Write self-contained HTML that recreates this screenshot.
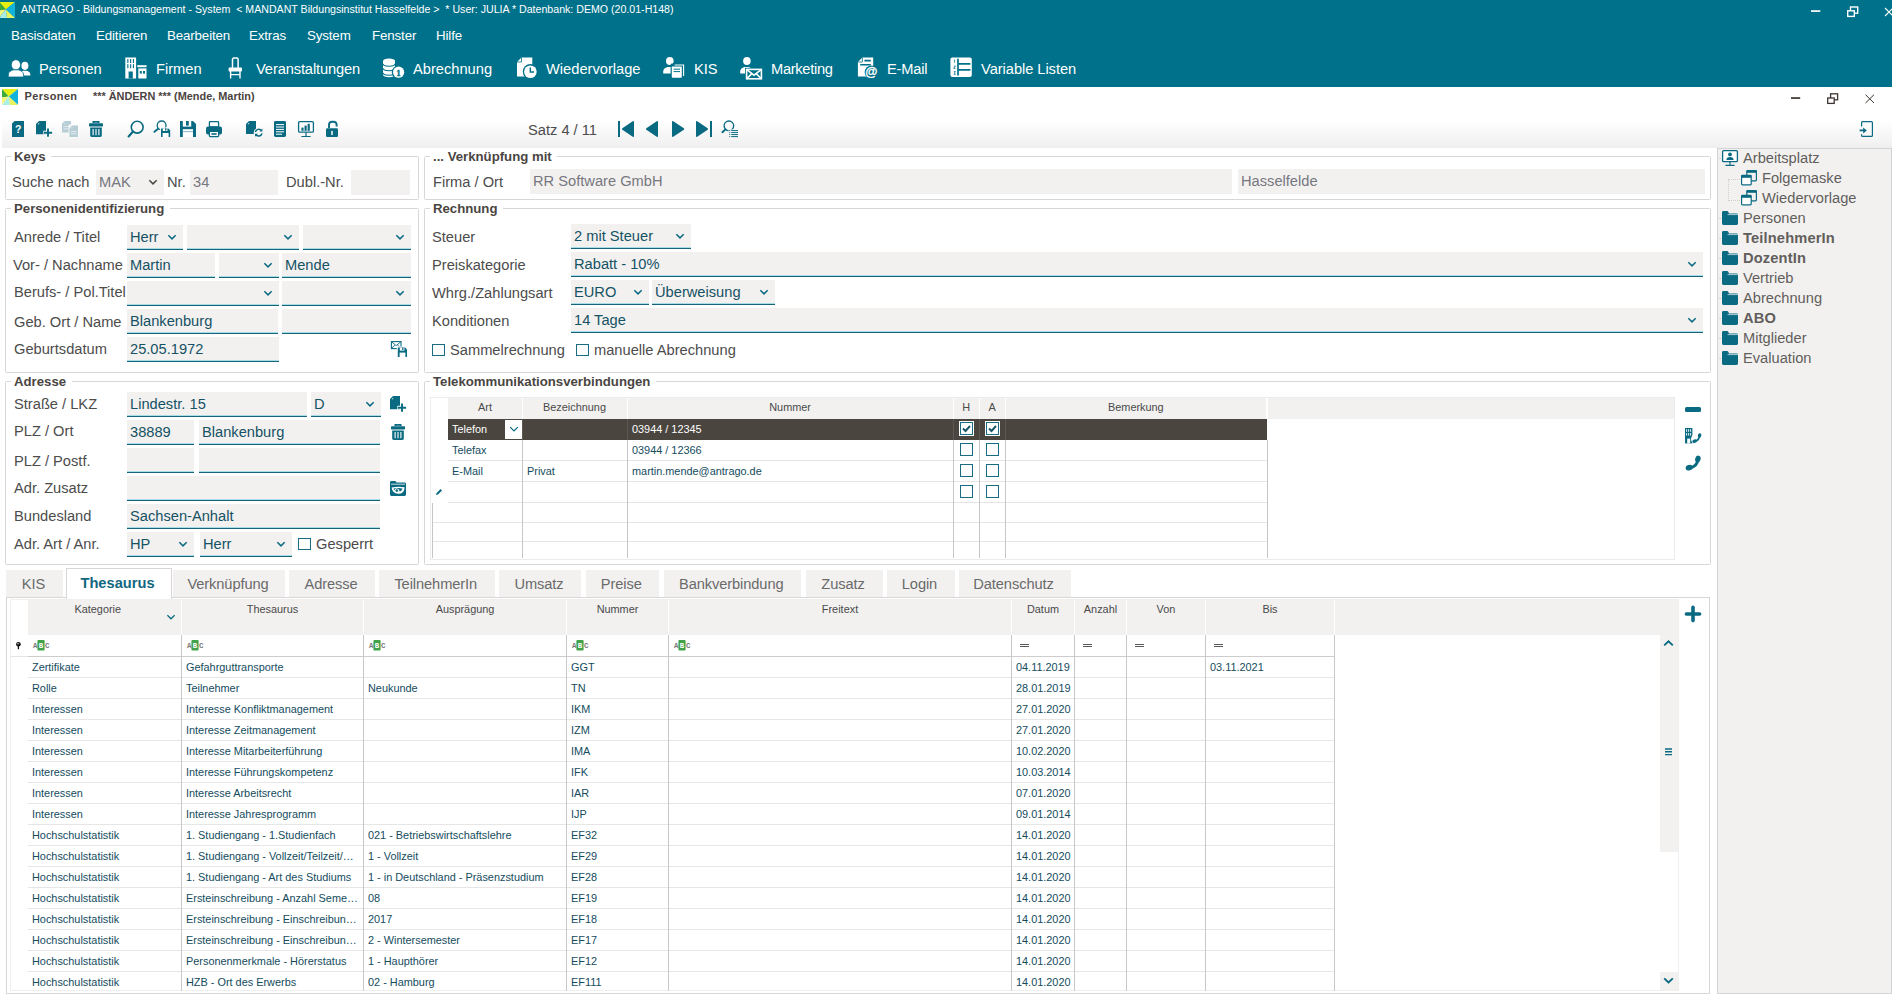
<!DOCTYPE html>
<html lang="de"><head><meta charset="utf-8"><title>ANTRAGO - Bildungsmanagement - System</title>
<style>
html,body{margin:0;padding:0;}
body{width:1892px;height:996px;overflow:hidden;background:#fff;position:relative;font-family:"Liberation Sans",Arial,sans-serif;}
.t{position:absolute;white-space:nowrap;}
.r{position:absolute;}
svg{overflow:visible;}
</style></head><body>
<div class="r" style="left:0px;top:0px;width:1892px;height:86.6px;background:#00718a;"></div>
<div class="t" style="left:21px;top:-1.50px;font-size:10.62px;color:#fff;line-height:20px;">ANTRAGO - Bildungsmanagement - System&nbsp; &lt; MANDANT Bildungsinstitut Hasselfelde &gt;&nbsp; * User: JULIA * Datenbank: DEMO (20.01-H148)</div>
<div class="t" style="left:11px;top:26.10px;font-size:13.33px;color:#fff;line-height:20px;letter-spacing:-0.14px;">Basisdaten</div>
<div class="t" style="left:96px;top:26.10px;font-size:13.33px;color:#fff;line-height:20px;letter-spacing:-0.14px;">Editieren</div>
<div class="t" style="left:167px;top:26.10px;font-size:13.33px;color:#fff;line-height:20px;letter-spacing:-0.14px;">Bearbeiten</div>
<div class="t" style="left:249px;top:26.10px;font-size:13.33px;color:#fff;line-height:20px;letter-spacing:-0.14px;">Extras</div>
<div class="t" style="left:307px;top:26.10px;font-size:13.33px;color:#fff;line-height:20px;letter-spacing:-0.14px;">System</div>
<div class="t" style="left:372px;top:26.10px;font-size:13.33px;color:#fff;line-height:20px;letter-spacing:-0.14px;">Fenster</div>
<div class="t" style="left:436px;top:26.10px;font-size:13.33px;color:#fff;line-height:20px;letter-spacing:-0.14px;">Hilfe</div>
<div class="t" style="left:39px;top:59.00px;font-size:14.67px;color:#fff;line-height:20px;letter-spacing:0px;">Personen</div>
<div class="t" style="left:156px;top:59.00px;font-size:14.67px;color:#fff;line-height:20px;letter-spacing:0px;">Firmen</div>
<div class="t" style="left:256px;top:59.00px;font-size:14.67px;color:#fff;line-height:20px;letter-spacing:-0.12px;">Veranstaltungen</div>
<div class="t" style="left:413px;top:59.00px;font-size:14.67px;color:#fff;line-height:20px;letter-spacing:0px;">Abrechnung</div>
<div class="t" style="left:546px;top:59.00px;font-size:14.67px;color:#fff;line-height:20px;letter-spacing:0px;">Wiedervorlage</div>
<div class="t" style="left:694px;top:59.00px;font-size:14.67px;color:#fff;line-height:20px;letter-spacing:0px;">KIS</div>
<div class="t" style="left:771px;top:59.00px;font-size:14.67px;color:#fff;line-height:20px;letter-spacing:-0.3px;">Marketing</div>
<div class="t" style="left:887px;top:59.00px;font-size:14.67px;color:#fff;line-height:20px;letter-spacing:-0.2px;">E-Mail</div>
<div class="t" style="left:981px;top:59.00px;font-size:14.67px;color:#fff;line-height:20px;letter-spacing:-0.05px;">Variable Listen</div>
<div class="t" style="left:24.5px;top:85.50px;font-size:11px;color:#4a4340;line-height:20px;font-weight:bold;letter-spacing:0.35px;">Personen</div>
<div class="t" style="left:93px;top:85.50px;font-size:10.9px;color:#4a4340;line-height:20px;font-weight:bold;">*** ÄNDERN *** (Mende, Martin)</div>
<div class="r" style="left:2px;top:114px;width:1890px;height:34px;background:linear-gradient(#ffffff 0%,#ffffff 18%,#f0efef 100%);"></div>
<div class="t" style="left:528px;top:120.00px;font-size:14.67px;color:#4c4c4c;line-height:20px;">Satz 4 / 11</div>
<div class="r" style="left:1717px;top:148px;width:175px;height:846px;background:#f2f1f0;border:1px solid #d4d4d4;box-sizing:border-box;"></div>
<div class="t" style="left:1743px;top:147.50px;font-size:14.67px;color:#625e5c;line-height:20px;">Arbeitsplatz</div>
<div class="t" style="left:1762px;top:167.50px;font-size:14.67px;color:#625e5c;line-height:20px;">Folgemaske</div>
<div class="t" style="left:1762px;top:187.50px;font-size:14.67px;color:#625e5c;line-height:20px;">Wiedervorlage</div>
<div class="t" style="left:1743px;top:207.50px;font-size:14.67px;color:#625e5c;line-height:20px;">Personen</div>
<div class="t" style="left:1743px;top:227.50px;font-size:14.67px;color:#625e5c;line-height:20px;font-weight:bold;letter-spacing:0.15px;">TeilnehmerIn</div>
<div class="t" style="left:1743px;top:247.50px;font-size:14.67px;color:#625e5c;line-height:20px;font-weight:bold;letter-spacing:0.15px;">DozentIn</div>
<div class="t" style="left:1743px;top:267.50px;font-size:14.67px;color:#625e5c;line-height:20px;">Vertrieb</div>
<div class="t" style="left:1743px;top:287.50px;font-size:14.67px;color:#625e5c;line-height:20px;">Abrechnung</div>
<div class="t" style="left:1743px;top:307.50px;font-size:14.67px;color:#625e5c;line-height:20px;font-weight:bold;letter-spacing:0.15px;">ABO</div>
<div class="t" style="left:1743px;top:327.50px;font-size:14.67px;color:#625e5c;line-height:20px;">Mitglieder</div>
<div class="t" style="left:1743px;top:347.50px;font-size:14.67px;color:#625e5c;line-height:20px;">Evaluation</div>
<div class="r" style="left:5px;top:156px;width:412px;height:42px;border:1px solid #d8d6d7;border-radius:1.5px;"></div>
<div class="t" style="left:11px;top:147.1px;font-size:13.2px;color:#4a4542;line-height:20px;font-weight:bold;background:linear-gradient(transparent 7px,#fff 7px,#fff 12px,transparent 12px);padding:0 5.5px 0 3px;">Keys</div>
<div class="t" style="left:12px;top:171.50px;font-size:14.67px;color:#4c4c4c;line-height:20px;">Suche nach</div>
<div class="r" style="left:96px;top:170px;width:68px;height:24.6px;background:#f2f1f0;"></div>
<div class="t" style="left:99px;top:172.00px;font-size:14.67px;color:#77777e;line-height:20px;">MAK</div>
<svg class="r" style="left:147px;top:176.3px" width="12" height="12" viewBox="-6 -6 12 12"><path d="M-3.68 -1.84 L0 1.84 L3.68 -1.84" fill="none" stroke="#4b4540" stroke-width="1.5"/></svg>
<div class="t" style="left:167px;top:172.00px;font-size:14.67px;color:#4c4c4c;line-height:20px;">Nr.</div>
<div class="r" style="left:190px;top:170px;width:88px;height:24.6px;background:#f2f1f0;"></div>
<div class="t" style="left:193px;top:172.00px;font-size:14.67px;color:#77777e;line-height:20px;">34</div>
<div class="t" style="left:286px;top:171.50px;font-size:14.67px;color:#4c4c4c;line-height:20px;">Dubl.-Nr.</div>
<div class="r" style="left:351px;top:170px;width:59px;height:24.6px;background:#f2f1f0;"></div>
<div class="r" style="left:424px;top:156px;width:1285px;height:42px;border:1px solid #d8d6d7;border-radius:1.5px;"></div>
<div class="t" style="left:430px;top:147.1px;font-size:13.2px;color:#4a4542;line-height:20px;font-weight:bold;background:linear-gradient(transparent 7px,#fff 7px,#fff 12px,transparent 12px);padding:0 5.5px 0 3px;">... Verknüpfung mit</div>
<div class="t" style="left:433px;top:171.50px;font-size:14.67px;color:#4c4c4c;line-height:20px;">Firma / Ort</div>
<div class="r" style="left:530px;top:169px;width:702px;height:25px;background:#f2f1f0;"></div>
<div class="t" style="left:533px;top:171.00px;font-size:14.67px;color:#77777e;line-height:20px;">RR Software GmbH</div>
<div class="r" style="left:1238px;top:169px;width:467px;height:25px;background:#f2f1f0;"></div>
<div class="t" style="left:1241px;top:171.00px;font-size:14.67px;color:#77777e;line-height:20px;">Hasselfelde</div>
<div class="r" style="left:5px;top:208px;width:412px;height:163px;border:1px solid #d8d6d7;border-radius:1.5px;"></div>
<div class="t" style="left:11px;top:199.1px;font-size:13.2px;color:#4a4542;line-height:20px;font-weight:bold;background:linear-gradient(transparent 7px,#fff 7px,#fff 12px,transparent 12px);padding:0 5.5px 0 3px;">Personenidentifizierung</div>
<div class="t" style="left:14px;top:226.50px;font-size:14.67px;color:#4c4c4c;line-height:20px;">Anrede / Titel</div>
<div class="r" style="left:127px;top:225px;width:56px;height:25px;background:#f2f1f0;"></div>
<div class="r" style="left:127px;top:248px;width:56px;height:1px;background:#a9dde6;"></div>
<div class="r" style="left:127px;top:248.6px;width:56px;height:1.4px;background:#17647a;"></div>
<div class="t" style="left:130px;top:227.00px;font-size:14.67px;color:#155264;line-height:20px;">Herr</div>
<svg class="r" style="left:166px;top:231.3px" width="12" height="12" viewBox="-6 -6 12 12"><path d="M-3.68 -1.84 L0 1.84 L3.68 -1.84" fill="none" stroke="#0b6a82" stroke-width="1.5"/></svg>
<div class="r" style="left:187px;top:225px;width:112px;height:25px;background:#f2f1f0;"></div>
<div class="r" style="left:187px;top:248px;width:112px;height:1px;background:#a9dde6;"></div>
<div class="r" style="left:187px;top:248.6px;width:112px;height:1.4px;background:#17647a;"></div>
<svg class="r" style="left:282px;top:231.3px" width="12" height="12" viewBox="-6 -6 12 12"><path d="M-3.68 -1.84 L0 1.84 L3.68 -1.84" fill="none" stroke="#0b6a82" stroke-width="1.5"/></svg>
<div class="r" style="left:303px;top:225px;width:108px;height:25px;background:#f2f1f0;"></div>
<div class="r" style="left:303px;top:248px;width:108px;height:1px;background:#a9dde6;"></div>
<div class="r" style="left:303px;top:248.6px;width:108px;height:1.4px;background:#17647a;"></div>
<svg class="r" style="left:394px;top:231.3px" width="12" height="12" viewBox="-6 -6 12 12"><path d="M-3.68 -1.84 L0 1.84 L3.68 -1.84" fill="none" stroke="#0b6a82" stroke-width="1.5"/></svg>
<div class="t" style="left:13px;top:254.50px;font-size:14.67px;color:#4c4c4c;line-height:20px;">Vor- / Nachname</div>
<div class="r" style="left:127px;top:253px;width:88px;height:25px;background:#f2f1f0;"></div>
<div class="r" style="left:127px;top:276px;width:88px;height:1px;background:#a9dde6;"></div>
<div class="r" style="left:127px;top:276.6px;width:88px;height:1.4px;background:#17647a;"></div>
<div class="t" style="left:130px;top:255.00px;font-size:14.67px;color:#155264;line-height:20px;">Martin</div>
<div class="r" style="left:219px;top:253px;width:60px;height:25px;background:#f2f1f0;"></div>
<div class="r" style="left:219px;top:276px;width:60px;height:1px;background:#a9dde6;"></div>
<div class="r" style="left:219px;top:276.6px;width:60px;height:1.4px;background:#17647a;"></div>
<svg class="r" style="left:262px;top:259.3px" width="12" height="12" viewBox="-6 -6 12 12"><path d="M-3.68 -1.84 L0 1.84 L3.68 -1.84" fill="none" stroke="#0b6a82" stroke-width="1.5"/></svg>
<div class="r" style="left:282px;top:253px;width:129px;height:25px;background:#f2f1f0;"></div>
<div class="r" style="left:282px;top:276px;width:129px;height:1px;background:#a9dde6;"></div>
<div class="r" style="left:282px;top:276.6px;width:129px;height:1.4px;background:#17647a;"></div>
<div class="t" style="left:285px;top:255.00px;font-size:14.67px;color:#155264;line-height:20px;">Mende</div>
<div class="t" style="left:14px;top:282.00px;font-size:14.67px;color:#4c4c4c;line-height:20px;">Berufs- / Pol.Titel</div>
<div class="r" style="left:127px;top:281px;width:152px;height:25px;background:#f2f1f0;"></div>
<div class="r" style="left:127px;top:304px;width:152px;height:1px;background:#a9dde6;"></div>
<div class="r" style="left:127px;top:304.6px;width:152px;height:1.4px;background:#17647a;"></div>
<svg class="r" style="left:262px;top:287.3px" width="12" height="12" viewBox="-6 -6 12 12"><path d="M-3.68 -1.84 L0 1.84 L3.68 -1.84" fill="none" stroke="#0b6a82" stroke-width="1.5"/></svg>
<div class="r" style="left:282px;top:281px;width:129px;height:25px;background:#f2f1f0;"></div>
<div class="r" style="left:282px;top:304px;width:129px;height:1px;background:#a9dde6;"></div>
<div class="r" style="left:282px;top:304.6px;width:129px;height:1.4px;background:#17647a;"></div>
<svg class="r" style="left:394px;top:287.3px" width="12" height="12" viewBox="-6 -6 12 12"><path d="M-3.68 -1.84 L0 1.84 L3.68 -1.84" fill="none" stroke="#0b6a82" stroke-width="1.5"/></svg>
<div class="t" style="left:14px;top:311.50px;font-size:14.67px;color:#4c4c4c;line-height:20px;">Geb. Ort / Name</div>
<div class="r" style="left:127px;top:309px;width:151px;height:25px;background:#f2f1f0;"></div>
<div class="r" style="left:127px;top:332px;width:151px;height:1px;background:#a9dde6;"></div>
<div class="r" style="left:127px;top:332.6px;width:151px;height:1.4px;background:#17647a;"></div>
<div class="t" style="left:130px;top:311.00px;font-size:14.67px;color:#155264;line-height:20px;">Blankenburg</div>
<div class="r" style="left:282px;top:309px;width:129px;height:25px;background:#f2f1f0;"></div>
<div class="r" style="left:282px;top:332px;width:129px;height:1px;background:#a9dde6;"></div>
<div class="r" style="left:282px;top:332.6px;width:129px;height:1.4px;background:#17647a;"></div>
<div class="t" style="left:14px;top:339.00px;font-size:14.67px;color:#4c4c4c;line-height:20px;">Geburtsdatum</div>
<div class="r" style="left:127px;top:337px;width:152px;height:25px;background:#f2f1f0;"></div>
<div class="r" style="left:127px;top:360px;width:152px;height:1px;background:#a9dde6;"></div>
<div class="r" style="left:127px;top:360.6px;width:152px;height:1.4px;background:#17647a;"></div>
<div class="t" style="left:130px;top:339.00px;font-size:14.67px;color:#155264;line-height:20px;">25.05.1972</div>
<div class="r" style="left:424px;top:208px;width:1285px;height:163px;border:1px solid #d8d6d7;border-radius:1.5px;"></div>
<div class="t" style="left:430px;top:199.1px;font-size:13.2px;color:#4a4542;line-height:20px;font-weight:bold;background:linear-gradient(transparent 7px,#fff 7px,#fff 12px,transparent 12px);padding:0 5.5px 0 3px;">Rechnung</div>
<div class="t" style="left:432px;top:226.50px;font-size:14.67px;color:#4c4c4c;line-height:20px;">Steuer</div>
<div class="r" style="left:571px;top:224px;width:120px;height:25px;background:#f2f1f0;"></div>
<div class="r" style="left:571px;top:247px;width:120px;height:1px;background:#a9dde6;"></div>
<div class="r" style="left:571px;top:247.6px;width:120px;height:1.4px;background:#17647a;"></div>
<div class="t" style="left:574px;top:226.00px;font-size:14.67px;color:#155264;line-height:20px;">2 mit Steuer</div>
<svg class="r" style="left:674px;top:230.3px" width="12" height="12" viewBox="-6 -6 12 12"><path d="M-3.68 -1.84 L0 1.84 L3.68 -1.84" fill="none" stroke="#0b6a82" stroke-width="1.5"/></svg>
<div class="t" style="left:432px;top:254.50px;font-size:14.67px;color:#4c4c4c;line-height:20px;">Preiskategorie</div>
<div class="r" style="left:571px;top:252px;width:1132px;height:25px;background:#f2f1f0;"></div>
<div class="r" style="left:571px;top:275px;width:1132px;height:1px;background:#a9dde6;"></div>
<div class="r" style="left:571px;top:275.6px;width:1132px;height:1.4px;background:#17647a;"></div>
<div class="t" style="left:574px;top:254.00px;font-size:14.67px;color:#155264;line-height:20px;">Rabatt - 10%</div>
<svg class="r" style="left:1686px;top:258.3px" width="12" height="12" viewBox="-6 -6 12 12"><path d="M-3.68 -1.84 L0 1.84 L3.68 -1.84" fill="none" stroke="#0b6a82" stroke-width="1.5"/></svg>
<div class="t" style="left:432px;top:282.50px;font-size:14.67px;color:#4c4c4c;line-height:20px;">Whrg./Zahlungsart</div>
<div class="r" style="left:571px;top:280px;width:78px;height:25px;background:#f2f1f0;"></div>
<div class="r" style="left:571px;top:303px;width:78px;height:1px;background:#a9dde6;"></div>
<div class="r" style="left:571px;top:303.6px;width:78px;height:1.4px;background:#17647a;"></div>
<div class="t" style="left:574px;top:282.00px;font-size:14.67px;color:#155264;line-height:20px;">EURO</div>
<svg class="r" style="left:632px;top:286.3px" width="12" height="12" viewBox="-6 -6 12 12"><path d="M-3.68 -1.84 L0 1.84 L3.68 -1.84" fill="none" stroke="#0b6a82" stroke-width="1.5"/></svg>
<div class="r" style="left:652px;top:280px;width:123px;height:25px;background:#f2f1f0;"></div>
<div class="r" style="left:652px;top:303px;width:123px;height:1px;background:#a9dde6;"></div>
<div class="r" style="left:652px;top:303.6px;width:123px;height:1.4px;background:#17647a;"></div>
<div class="t" style="left:655px;top:282.00px;font-size:14.67px;color:#155264;line-height:20px;">Überweisung</div>
<svg class="r" style="left:758px;top:286.3px" width="12" height="12" viewBox="-6 -6 12 12"><path d="M-3.68 -1.84 L0 1.84 L3.68 -1.84" fill="none" stroke="#0b6a82" stroke-width="1.5"/></svg>
<div class="t" style="left:432px;top:310.50px;font-size:14.67px;color:#4c4c4c;line-height:20px;">Konditionen</div>
<div class="r" style="left:571px;top:308px;width:1132px;height:25px;background:#f2f1f0;"></div>
<div class="r" style="left:571px;top:331px;width:1132px;height:1px;background:#a9dde6;"></div>
<div class="r" style="left:571px;top:331.6px;width:1132px;height:1.4px;background:#17647a;"></div>
<div class="t" style="left:574px;top:310.00px;font-size:14.67px;color:#155264;line-height:20px;">14 Tage</div>
<svg class="r" style="left:1686px;top:314.3px" width="12" height="12" viewBox="-6 -6 12 12"><path d="M-3.68 -1.84 L0 1.84 L3.68 -1.84" fill="none" stroke="#0b6a82" stroke-width="1.5"/></svg>
<div class="r" style="left:432px;top:343.5px;width:10.6px;height:10.6px;border:1.2px solid #1b6c82;background:#fff;box-shadow:inset 0 0 1px #bfeef5;"></div>
<div class="t" style="left:450px;top:339.50px;font-size:14.67px;color:#4c4c4c;line-height:20px;">Sammelrechnung</div>
<div class="r" style="left:576px;top:343.5px;width:10.6px;height:10.6px;border:1.2px solid #1b6c82;background:#fff;box-shadow:inset 0 0 1px #bfeef5;"></div>
<div class="t" style="left:594px;top:339.50px;font-size:14.67px;color:#4c4c4c;line-height:20px;">manuelle Abrechnung</div>
<div class="r" style="left:5px;top:381px;width:412px;height:182px;border:1px solid #d8d6d7;border-radius:1.5px;"></div>
<div class="t" style="left:11px;top:372.1px;font-size:13.2px;color:#4a4542;line-height:20px;font-weight:bold;background:linear-gradient(transparent 7px,#fff 7px,#fff 12px,transparent 12px);padding:0 5.5px 0 3px;">Adresse</div>
<div class="t" style="left:14px;top:393.70px;font-size:14.67px;color:#4c4c4c;line-height:20px;">Straße / LKZ</div>
<div class="r" style="left:127px;top:392px;width:180px;height:25px;background:#f2f1f0;"></div>
<div class="r" style="left:127px;top:415px;width:180px;height:1px;background:#a9dde6;"></div>
<div class="r" style="left:127px;top:415.6px;width:180px;height:1.4px;background:#17647a;"></div>
<div class="t" style="left:130px;top:394.00px;font-size:14.67px;color:#155264;line-height:20px;">Lindestr. 15</div>
<div class="r" style="left:311px;top:392px;width:70px;height:25px;background:#f2f1f0;"></div>
<div class="r" style="left:311px;top:415px;width:70px;height:1px;background:#a9dde6;"></div>
<div class="r" style="left:311px;top:415.6px;width:70px;height:1.4px;background:#17647a;"></div>
<div class="t" style="left:314px;top:394.00px;font-size:14.67px;color:#155264;line-height:20px;">D</div>
<svg class="r" style="left:364px;top:398.3px" width="12" height="12" viewBox="-6 -6 12 12"><path d="M-3.68 -1.84 L0 1.84 L3.68 -1.84" fill="none" stroke="#0b6a82" stroke-width="1.5"/></svg>
<div class="t" style="left:14px;top:421.00px;font-size:14.67px;color:#4c4c4c;line-height:20px;">PLZ / Ort</div>
<div class="r" style="left:127px;top:420px;width:67px;height:25px;background:#f2f1f0;"></div>
<div class="r" style="left:127px;top:443px;width:67px;height:1px;background:#a9dde6;"></div>
<div class="r" style="left:127px;top:443.6px;width:67px;height:1.4px;background:#17647a;"></div>
<div class="t" style="left:130px;top:422.00px;font-size:14.67px;color:#155264;line-height:20px;">38889</div>
<div class="r" style="left:199px;top:420px;width:181px;height:25px;background:#f2f1f0;"></div>
<div class="r" style="left:199px;top:443px;width:181px;height:1px;background:#a9dde6;"></div>
<div class="r" style="left:199px;top:443.6px;width:181px;height:1.4px;background:#17647a;"></div>
<div class="t" style="left:202px;top:422.00px;font-size:14.67px;color:#155264;line-height:20px;">Blankenburg</div>
<div class="t" style="left:14px;top:450.70px;font-size:14.67px;color:#4c4c4c;line-height:20px;">PLZ / Postf.</div>
<div class="r" style="left:127px;top:448px;width:67px;height:25px;background:#f2f1f0;"></div>
<div class="r" style="left:127px;top:471px;width:67px;height:1px;background:#a9dde6;"></div>
<div class="r" style="left:127px;top:471.6px;width:67px;height:1.4px;background:#17647a;"></div>
<div class="r" style="left:199px;top:448px;width:181px;height:25px;background:#f2f1f0;"></div>
<div class="r" style="left:199px;top:471px;width:181px;height:1px;background:#a9dde6;"></div>
<div class="r" style="left:199px;top:471.6px;width:181px;height:1.4px;background:#17647a;"></div>
<div class="t" style="left:14px;top:478.00px;font-size:14.67px;color:#4c4c4c;line-height:20px;">Adr. Zusatz</div>
<div class="r" style="left:127px;top:476px;width:253px;height:25px;background:#f2f1f0;"></div>
<div class="r" style="left:127px;top:499px;width:253px;height:1px;background:#a9dde6;"></div>
<div class="r" style="left:127px;top:499.6px;width:253px;height:1.4px;background:#17647a;"></div>
<div class="t" style="left:14px;top:506.00px;font-size:14.67px;color:#4c4c4c;line-height:20px;">Bundesland</div>
<div class="r" style="left:127px;top:504px;width:253px;height:25px;background:#f2f1f0;"></div>
<div class="r" style="left:127px;top:527px;width:253px;height:1px;background:#a9dde6;"></div>
<div class="r" style="left:127px;top:527.6px;width:253px;height:1.4px;background:#17647a;"></div>
<div class="t" style="left:130px;top:506.00px;font-size:14.67px;color:#155264;line-height:20px;">Sachsen-Anhalt</div>
<div class="t" style="left:14px;top:534.00px;font-size:14.67px;color:#4c4c4c;line-height:20px;">Adr. Art / Anr.</div>
<div class="r" style="left:127px;top:532px;width:67px;height:25px;background:#f2f1f0;"></div>
<div class="r" style="left:127px;top:555px;width:67px;height:1px;background:#a9dde6;"></div>
<div class="r" style="left:127px;top:555.6px;width:67px;height:1.4px;background:#17647a;"></div>
<div class="t" style="left:130px;top:534.00px;font-size:14.67px;color:#155264;line-height:20px;">HP</div>
<svg class="r" style="left:177px;top:538.3px" width="12" height="12" viewBox="-6 -6 12 12"><path d="M-3.68 -1.84 L0 1.84 L3.68 -1.84" fill="none" stroke="#0b6a82" stroke-width="1.5"/></svg>
<div class="r" style="left:200px;top:532px;width:92px;height:25px;background:#f2f1f0;"></div>
<div class="r" style="left:200px;top:555px;width:92px;height:1px;background:#a9dde6;"></div>
<div class="r" style="left:200px;top:555.6px;width:92px;height:1.4px;background:#17647a;"></div>
<div class="t" style="left:203px;top:534.00px;font-size:14.67px;color:#155264;line-height:20px;">Herr</div>
<svg class="r" style="left:275px;top:538.3px" width="12" height="12" viewBox="-6 -6 12 12"><path d="M-3.68 -1.84 L0 1.84 L3.68 -1.84" fill="none" stroke="#0b6a82" stroke-width="1.5"/></svg>
<div class="r" style="left:298px;top:537.5px;width:10.6px;height:10.6px;border:1.2px solid #1b6c82;background:#fff;box-shadow:inset 0 0 1px #bfeef5;"></div>
<div class="t" style="left:316px;top:534.00px;font-size:14.67px;color:#4c4c4c;line-height:20px;">Gesperrt</div>
<div class="r" style="left:424px;top:381px;width:1285px;height:182px;border:1px solid #d8d6d7;border-radius:1.5px;"></div>
<div class="t" style="left:430px;top:372.1px;font-size:13.2px;color:#4a4542;line-height:20px;font-weight:bold;background:linear-gradient(transparent 7px,#fff 7px,#fff 12px,transparent 12px);padding:0 5.5px 0 3px;">Telekommunikationsverbindungen</div>
<div class="r" style="left:430px;top:397px;width:1243px;height:161px;border:1px solid #ececec;"></div>
<div class="r" style="left:448px;top:397.5px;width:1226px;height:21px;background:#f2f1f0;"></div>
<div class="r" style="left:521.5px;top:397.5px;width:1.5px;height:21px;background:#fff;"></div>
<div class="r" style="left:626.5px;top:397.5px;width:1.5px;height:21px;background:#fff;"></div>
<div class="r" style="left:952.7px;top:397.5px;width:1.5px;height:21px;background:#fff;"></div>
<div class="r" style="left:978.5px;top:397.5px;width:1.5px;height:21px;background:#fff;"></div>
<div class="r" style="left:1004.7px;top:397.5px;width:1.5px;height:21px;background:#fff;"></div>
<div class="r" style="left:1266.0px;top:397.5px;width:1.5px;height:21px;background:#fff;"></div>
<div class="t" style="left:448px;top:397.00px;font-size:10.9px;color:#4a4a4a;line-height:20px;width:74px;text-align:center;">Art</div>
<div class="t" style="left:522px;top:397.00px;font-size:10.9px;color:#4a4a4a;line-height:20px;width:105px;text-align:center;">Bezeichnung</div>
<div class="t" style="left:627px;top:397.00px;font-size:10.9px;color:#4a4a4a;line-height:20px;width:326.20000000000005px;text-align:center;">Nummer</div>
<div class="t" style="left:953.2px;top:397.00px;font-size:10.9px;color:#4a4a4a;line-height:20px;width:25.799999999999955px;text-align:center;">H</div>
<div class="t" style="left:979px;top:397.00px;font-size:10.9px;color:#4a4a4a;line-height:20px;width:26.200000000000045px;text-align:center;">A</div>
<div class="t" style="left:1005.2px;top:397.00px;font-size:10.9px;color:#4a4a4a;line-height:20px;width:261.29999999999995px;text-align:center;">Bemerkung</div>
<div class="r" style="left:448px;top:419px;width:818.5px;height:20.6px;background:#4b4540;"></div>
<div class="r" style="left:522px;top:419px;width:1px;height:20.6px;background:#5e5853;"></div>
<div class="r" style="left:627px;top:419px;width:1px;height:20.6px;background:#5e5853;"></div>
<div class="r" style="left:953.2px;top:419px;width:1px;height:20.6px;background:#5e5853;"></div>
<div class="r" style="left:979px;top:419px;width:1px;height:20.6px;background:#5e5853;"></div>
<div class="r" style="left:1005.2px;top:419px;width:1px;height:20.6px;background:#5e5853;"></div>
<div class="r" style="left:505px;top:419.5px;width:17px;height:19.3px;background:#fff;"></div>
<svg class="r" style="left:507.5px;top:423px" width="12" height="12" viewBox="-6 -6 12 12"><path d="M-3.8 -1.9 L0 1.9 L3.8 -1.9" fill="none" stroke="#0b6a82" stroke-width="1.3"/></svg>
<div class="t" style="left:452px;top:419.00px;font-size:10.9px;color:#fff;line-height:20px;">Telefon</div>
<div class="t" style="left:632px;top:419.00px;font-size:10.9px;color:#fff;line-height:20px;">03944 / 12345</div>
<div class="t" style="left:452px;top:440.00px;font-size:10.9px;color:#144c5e;line-height:20px;">Telefax</div>
<div class="t" style="left:632px;top:440.00px;font-size:10.9px;color:#144c5e;line-height:20px;">03944 / 12366</div>
<div class="t" style="left:452px;top:460.50px;font-size:10.9px;color:#144c5e;line-height:20px;">E-Mail</div>
<div class="t" style="left:527px;top:460.50px;font-size:10.9px;color:#144c5e;line-height:20px;">Privat</div>
<div class="t" style="left:632px;top:460.50px;font-size:10.9px;color:#144c5e;line-height:20px;">martin.mende@antrago.de</div>
<div class="r" style="left:448px;top:460px;width:818.5px;height:1px;background:#e4e4e4;"></div>
<div class="r" style="left:448px;top:481px;width:818.5px;height:1px;background:#e4e4e4;"></div>
<div class="r" style="left:448px;top:502px;width:818.5px;height:1px;background:#e4e4e4;"></div>
<div class="r" style="left:432px;top:522px;width:834.5px;height:1px;background:#e4e4e4;"></div>
<div class="r" style="left:432px;top:541px;width:834.5px;height:1px;background:#e4e4e4;"></div>
<div class="r" style="left:522px;top:439.6px;width:1px;height:118.4px;background:#c6c6ca;"></div>
<div class="r" style="left:627px;top:439.6px;width:1px;height:118.4px;background:#c6c6ca;"></div>
<div class="r" style="left:953.2px;top:439.6px;width:1px;height:118.4px;background:#c6c6ca;"></div>
<div class="r" style="left:979px;top:439.6px;width:1px;height:118.4px;background:#c6c6ca;"></div>
<div class="r" style="left:1005.2px;top:439.6px;width:1px;height:118.4px;background:#c6c6ca;"></div>
<div class="r" style="left:1266.5px;top:439.6px;width:1px;height:118.4px;background:#c6c6ca;"></div>
<div class="r" style="left:432px;top:503px;width:1px;height:55px;background:#c6c6ca;"></div>
<div class="r" style="left:959px;top:421px;width:15px;height:15px;background:#fff;"></div>
<div class="r" style="left:985px;top:421px;width:15px;height:15px;background:#fff;"></div>
<div class="r" style="left:960px;top:422.0px;width:10.6px;height:10.6px;border:1.2px solid #1b6c82;background:#fff;box-shadow:inset 0 0 1px #bfeef5;"></div>
<svg class="r" style="left:960px;top:422.0px" width="13" height="13" viewBox="0 0 13 13"><path d="M3 6.5 L5.5 9 L10 4" fill="none" stroke="#17566a" stroke-width="1.9"/></svg>
<div class="r" style="left:986px;top:422.0px;width:10.6px;height:10.6px;border:1.2px solid #1b6c82;background:#fff;box-shadow:inset 0 0 1px #bfeef5;"></div>
<svg class="r" style="left:986px;top:422.0px" width="13" height="13" viewBox="0 0 13 13"><path d="M3 6.5 L5.5 9 L10 4" fill="none" stroke="#17566a" stroke-width="1.9"/></svg>
<div class="r" style="left:960px;top:443.0px;width:10.6px;height:10.6px;border:1.2px solid #1b6c82;background:#fff;box-shadow:inset 0 0 1px #bfeef5;"></div>
<div class="r" style="left:986px;top:443.0px;width:10.6px;height:10.6px;border:1.2px solid #1b6c82;background:#fff;box-shadow:inset 0 0 1px #bfeef5;"></div>
<div class="r" style="left:960px;top:464.0px;width:10.6px;height:10.6px;border:1.2px solid #1b6c82;background:#fff;box-shadow:inset 0 0 1px #bfeef5;"></div>
<div class="r" style="left:986px;top:464.0px;width:10.6px;height:10.6px;border:1.2px solid #1b6c82;background:#fff;box-shadow:inset 0 0 1px #bfeef5;"></div>
<div class="r" style="left:960px;top:485.0px;width:10.6px;height:10.6px;border:1.2px solid #1b6c82;background:#fff;box-shadow:inset 0 0 1px #bfeef5;"></div>
<div class="r" style="left:986px;top:485.0px;width:10.6px;height:10.6px;border:1.2px solid #1b6c82;background:#fff;box-shadow:inset 0 0 1px #bfeef5;"></div>
<div class="r" style="left:6px;top:570.2px;width:57px;height:26.8px;background:#f2f1f0;"></div>
<div class="t" style="left:5px;top:573.50px;font-size:14.67px;color:#6a6a6a;line-height:20px;width:57px;text-align:center;letter-spacing:-0.1px;">KIS</div>
<div class="r" style="left:173px;top:570.2px;width:112px;height:26.8px;background:#f2f1f0;"></div>
<div class="t" style="left:172px;top:573.50px;font-size:14.67px;color:#6a6a6a;line-height:20px;width:112px;text-align:center;letter-spacing:-0.1px;">Verknüpfung</div>
<div class="r" style="left:289px;top:570.2px;width:86px;height:26.8px;background:#f2f1f0;"></div>
<div class="t" style="left:288px;top:573.50px;font-size:14.67px;color:#6a6a6a;line-height:20px;width:86px;text-align:center;letter-spacing:-0.1px;">Adresse</div>
<div class="r" style="left:378.5px;top:570.2px;width:116.5px;height:26.8px;background:#f2f1f0;"></div>
<div class="t" style="left:377.5px;top:573.50px;font-size:14.67px;color:#6a6a6a;line-height:20px;width:116.5px;text-align:center;letter-spacing:-0.1px;">TeilnehmerIn</div>
<div class="r" style="left:499px;top:570.2px;width:82px;height:26.8px;background:#f2f1f0;"></div>
<div class="t" style="left:498px;top:573.50px;font-size:14.67px;color:#6a6a6a;line-height:20px;width:82px;text-align:center;letter-spacing:-0.1px;">Umsatz</div>
<div class="r" style="left:585.5px;top:570.2px;width:73.5px;height:26.8px;background:#f2f1f0;"></div>
<div class="t" style="left:584.5px;top:573.50px;font-size:14.67px;color:#6a6a6a;line-height:20px;width:73.5px;text-align:center;letter-spacing:-0.1px;">Preise</div>
<div class="r" style="left:663.5px;top:570.2px;width:137.5px;height:26.8px;background:#f2f1f0;"></div>
<div class="t" style="left:662.5px;top:573.50px;font-size:14.67px;color:#6a6a6a;line-height:20px;width:137.5px;text-align:center;letter-spacing:-0.1px;">Bankverbindung</div>
<div class="r" style="left:805.5px;top:570.2px;width:77.0px;height:26.8px;background:#f2f1f0;"></div>
<div class="t" style="left:804.5px;top:573.50px;font-size:14.67px;color:#6a6a6a;line-height:20px;width:77.0px;text-align:center;letter-spacing:-0.1px;">Zusatz</div>
<div class="r" style="left:886.5px;top:570.2px;width:68.0px;height:26.8px;background:#f2f1f0;"></div>
<div class="t" style="left:885.5px;top:573.50px;font-size:14.67px;color:#6a6a6a;line-height:20px;width:68.0px;text-align:center;letter-spacing:-0.1px;">Login</div>
<div class="r" style="left:958.5px;top:570.2px;width:112.0px;height:26.8px;background:#f2f1f0;"></div>
<div class="t" style="left:957.5px;top:573.50px;font-size:14.67px;color:#6a6a6a;line-height:20px;width:112.0px;text-align:center;letter-spacing:-0.1px;">Datenschutz</div>
<div class="r" style="left:6px;top:597px;width:1702.4px;height:395px;border:1px solid #d8d6d7;"></div>
<div class="r" style="left:65.8px;top:567.8px;width:103.8px;height:30.2px;border:1px solid #d8d6d7;border-bottom:none;background:#fff;"></div>
<div class="t" style="left:65px;top:572.50px;font-size:14.67px;color:#12677f;line-height:20px;font-weight:bold;width:105px;text-align:center;">Thesaurus</div>
<div class="r" style="left:28px;top:599.5px;width:1650px;height:35px;background:#f2f1f0;"></div>
<div class="r" style="left:180.8px;top:599.5px;width:1.5px;height:35px;background:#fff;"></div>
<div class="r" style="left:362.8px;top:599.5px;width:1.5px;height:35px;background:#fff;"></div>
<div class="r" style="left:565.8px;top:599.5px;width:1.5px;height:35px;background:#fff;"></div>
<div class="r" style="left:667.8px;top:599.5px;width:1.5px;height:35px;background:#fff;"></div>
<div class="r" style="left:1010.8px;top:599.5px;width:1.5px;height:35px;background:#fff;"></div>
<div class="r" style="left:1073.8px;top:599.5px;width:1.5px;height:35px;background:#fff;"></div>
<div class="r" style="left:1125.8px;top:599.5px;width:1.5px;height:35px;background:#fff;"></div>
<div class="r" style="left:1204.8px;top:599.5px;width:1.5px;height:35px;background:#fff;"></div>
<div class="r" style="left:1333.8px;top:599.5px;width:1.5px;height:35px;background:#fff;"></div>
<div class="t" style="left:28px;top:598.50px;font-size:10.9px;color:#4a4a4a;line-height:20px;width:139.5px;text-align:center;">Kategorie</div>
<div class="t" style="left:181.5px;top:598.50px;font-size:10.9px;color:#4a4a4a;line-height:20px;width:182.0px;text-align:center;">Thesaurus</div>
<div class="t" style="left:363.5px;top:598.50px;font-size:10.9px;color:#4a4a4a;line-height:20px;width:203.0px;text-align:center;">Ausprägung</div>
<div class="t" style="left:566.5px;top:598.50px;font-size:10.9px;color:#4a4a4a;line-height:20px;width:102.0px;text-align:center;">Nummer</div>
<div class="t" style="left:668.5px;top:598.50px;font-size:10.9px;color:#4a4a4a;line-height:20px;width:343.0px;text-align:center;">Freitext</div>
<div class="t" style="left:1011.5px;top:598.50px;font-size:10.9px;color:#4a4a4a;line-height:20px;width:63.0px;text-align:center;">Datum</div>
<div class="t" style="left:1074.5px;top:598.50px;font-size:10.9px;color:#4a4a4a;line-height:20px;width:52.0px;text-align:center;">Anzahl</div>
<div class="t" style="left:1126.5px;top:598.50px;font-size:10.9px;color:#4a4a4a;line-height:20px;width:79.0px;text-align:center;">Von</div>
<div class="t" style="left:1205.5px;top:598.50px;font-size:10.9px;color:#4a4a4a;line-height:20px;width:129.0px;text-align:center;">Bis</div>
<svg class="r" style="left:165px;top:611px" width="12" height="12" viewBox="-6 -6 12 12"><path d="M-3.6 -1.8 L0 1.8 L3.6 -1.8" fill="none" stroke="#0b6a82" stroke-width="1.3"/></svg>
<div class="r" style="left:11px;top:655.6px;width:17px;height:1.5px;background:#e4e4e4;"></div>
<div class="r" style="left:28px;top:655.6px;width:1306px;height:1.5px;background:#cdcdcd;"></div>
<div class="r" style="left:10px;top:599px;width:1666.6px;height:389.6px;border:1px solid #efefef;"></div>
<div class="t" style="left:32px;top:656.50px;font-size:10.9px;color:#144c5e;line-height:20px;">Zertifikate</div>
<div class="t" style="left:186px;top:656.50px;font-size:10.9px;color:#144c5e;line-height:20px;">Gefahrguttransporte</div>
<div class="t" style="left:571px;top:656.50px;font-size:10.9px;color:#144c5e;line-height:20px;">GGT</div>
<div class="t" style="left:1016px;top:656.50px;font-size:10.9px;color:#144c5e;line-height:20px;">04.11.2019</div>
<div class="t" style="left:1210px;top:656.50px;font-size:10.9px;color:#144c5e;line-height:20px;">03.11.2021</div>
<div class="r" style="left:28px;top:677px;width:1306px;height:1px;background:#e6e6e6;"></div>
<div class="t" style="left:32px;top:677.50px;font-size:10.9px;color:#144c5e;line-height:20px;">Rolle</div>
<div class="t" style="left:186px;top:677.50px;font-size:10.9px;color:#144c5e;line-height:20px;">Teilnehmer</div>
<div class="t" style="left:368px;top:677.50px;font-size:10.9px;color:#144c5e;line-height:20px;">Neukunde</div>
<div class="t" style="left:571px;top:677.50px;font-size:10.9px;color:#144c5e;line-height:20px;">TN</div>
<div class="t" style="left:1016px;top:677.50px;font-size:10.9px;color:#144c5e;line-height:20px;">28.01.2019</div>
<div class="r" style="left:28px;top:698px;width:1306px;height:1px;background:#e6e6e6;"></div>
<div class="t" style="left:32px;top:698.50px;font-size:10.9px;color:#144c5e;line-height:20px;">Interessen</div>
<div class="t" style="left:186px;top:698.50px;font-size:10.9px;color:#144c5e;line-height:20px;">Interesse Konfliktmanagement</div>
<div class="t" style="left:571px;top:698.50px;font-size:10.9px;color:#144c5e;line-height:20px;">IKM</div>
<div class="t" style="left:1016px;top:698.50px;font-size:10.9px;color:#144c5e;line-height:20px;">27.01.2020</div>
<div class="r" style="left:28px;top:719px;width:1306px;height:1px;background:#e6e6e6;"></div>
<div class="t" style="left:32px;top:719.50px;font-size:10.9px;color:#144c5e;line-height:20px;">Interessen</div>
<div class="t" style="left:186px;top:719.50px;font-size:10.9px;color:#144c5e;line-height:20px;">Interesse Zeitmanagement</div>
<div class="t" style="left:571px;top:719.50px;font-size:10.9px;color:#144c5e;line-height:20px;">IZM</div>
<div class="t" style="left:1016px;top:719.50px;font-size:10.9px;color:#144c5e;line-height:20px;">27.01.2020</div>
<div class="r" style="left:28px;top:740px;width:1306px;height:1px;background:#e6e6e6;"></div>
<div class="t" style="left:32px;top:740.50px;font-size:10.9px;color:#144c5e;line-height:20px;">Interessen</div>
<div class="t" style="left:186px;top:740.50px;font-size:10.9px;color:#144c5e;line-height:20px;">Interesse Mitarbeiterführung</div>
<div class="t" style="left:571px;top:740.50px;font-size:10.9px;color:#144c5e;line-height:20px;">IMA</div>
<div class="t" style="left:1016px;top:740.50px;font-size:10.9px;color:#144c5e;line-height:20px;">10.02.2020</div>
<div class="r" style="left:28px;top:761px;width:1306px;height:1px;background:#e6e6e6;"></div>
<div class="t" style="left:32px;top:761.50px;font-size:10.9px;color:#144c5e;line-height:20px;">Interessen</div>
<div class="t" style="left:186px;top:761.50px;font-size:10.9px;color:#144c5e;line-height:20px;">Interesse Führungskompetenz</div>
<div class="t" style="left:571px;top:761.50px;font-size:10.9px;color:#144c5e;line-height:20px;">IFK</div>
<div class="t" style="left:1016px;top:761.50px;font-size:10.9px;color:#144c5e;line-height:20px;">10.03.2014</div>
<div class="r" style="left:28px;top:782px;width:1306px;height:1px;background:#e6e6e6;"></div>
<div class="t" style="left:32px;top:782.50px;font-size:10.9px;color:#144c5e;line-height:20px;">Interessen</div>
<div class="t" style="left:186px;top:782.50px;font-size:10.9px;color:#144c5e;line-height:20px;">Interesse Arbeitsrecht</div>
<div class="t" style="left:571px;top:782.50px;font-size:10.9px;color:#144c5e;line-height:20px;">IAR</div>
<div class="t" style="left:1016px;top:782.50px;font-size:10.9px;color:#144c5e;line-height:20px;">07.01.2020</div>
<div class="r" style="left:28px;top:803px;width:1306px;height:1px;background:#e6e6e6;"></div>
<div class="t" style="left:32px;top:803.50px;font-size:10.9px;color:#144c5e;line-height:20px;">Interessen</div>
<div class="t" style="left:186px;top:803.50px;font-size:10.9px;color:#144c5e;line-height:20px;">Interesse Jahresprogramm</div>
<div class="t" style="left:571px;top:803.50px;font-size:10.9px;color:#144c5e;line-height:20px;">IJP</div>
<div class="t" style="left:1016px;top:803.50px;font-size:10.9px;color:#144c5e;line-height:20px;">09.01.2014</div>
<div class="r" style="left:28px;top:824px;width:1306px;height:1px;background:#e6e6e6;"></div>
<div class="t" style="left:32px;top:824.50px;font-size:10.9px;color:#144c5e;line-height:20px;">Hochschulstatistik</div>
<div class="t" style="left:186px;top:824.50px;font-size:10.9px;color:#144c5e;line-height:20px;">1. Studiengang - 1.Studienfach</div>
<div class="t" style="left:368px;top:824.50px;font-size:10.9px;color:#144c5e;line-height:20px;">021 - Betriebswirtschaftslehre</div>
<div class="t" style="left:571px;top:824.50px;font-size:10.9px;color:#144c5e;line-height:20px;">EF32</div>
<div class="t" style="left:1016px;top:824.50px;font-size:10.9px;color:#144c5e;line-height:20px;">14.01.2020</div>
<div class="r" style="left:28px;top:845px;width:1306px;height:1px;background:#e6e6e6;"></div>
<div class="t" style="left:32px;top:845.50px;font-size:10.9px;color:#144c5e;line-height:20px;">Hochschulstatistik</div>
<div class="t" style="left:186px;top:845.50px;font-size:10.9px;color:#144c5e;line-height:20px;">1. Studiengang - Vollzeit/Teilzeit/…</div>
<div class="t" style="left:368px;top:845.50px;font-size:10.9px;color:#144c5e;line-height:20px;">1 - Vollzeit</div>
<div class="t" style="left:571px;top:845.50px;font-size:10.9px;color:#144c5e;line-height:20px;">EF29</div>
<div class="t" style="left:1016px;top:845.50px;font-size:10.9px;color:#144c5e;line-height:20px;">14.01.2020</div>
<div class="r" style="left:28px;top:866px;width:1306px;height:1px;background:#e6e6e6;"></div>
<div class="t" style="left:32px;top:866.50px;font-size:10.9px;color:#144c5e;line-height:20px;">Hochschulstatistik</div>
<div class="t" style="left:186px;top:866.50px;font-size:10.9px;color:#144c5e;line-height:20px;">1. Studiengang - Art des Studiums</div>
<div class="t" style="left:368px;top:866.50px;font-size:10.9px;color:#144c5e;line-height:20px;">1 - in Deutschland - Präsenzstudium</div>
<div class="t" style="left:571px;top:866.50px;font-size:10.9px;color:#144c5e;line-height:20px;">EF28</div>
<div class="t" style="left:1016px;top:866.50px;font-size:10.9px;color:#144c5e;line-height:20px;">14.01.2020</div>
<div class="r" style="left:28px;top:887px;width:1306px;height:1px;background:#e6e6e6;"></div>
<div class="t" style="left:32px;top:887.50px;font-size:10.9px;color:#144c5e;line-height:20px;">Hochschulstatistik</div>
<div class="t" style="left:186px;top:887.50px;font-size:10.9px;color:#144c5e;line-height:20px;">Ersteinschreibung - Anzahl Seme…</div>
<div class="t" style="left:368px;top:887.50px;font-size:10.9px;color:#144c5e;line-height:20px;">08</div>
<div class="t" style="left:571px;top:887.50px;font-size:10.9px;color:#144c5e;line-height:20px;">EF19</div>
<div class="t" style="left:1016px;top:887.50px;font-size:10.9px;color:#144c5e;line-height:20px;">14.01.2020</div>
<div class="r" style="left:28px;top:908px;width:1306px;height:1px;background:#e6e6e6;"></div>
<div class="t" style="left:32px;top:908.50px;font-size:10.9px;color:#144c5e;line-height:20px;">Hochschulstatistik</div>
<div class="t" style="left:186px;top:908.50px;font-size:10.9px;color:#144c5e;line-height:20px;">Ersteinschreibung - Einschreibun…</div>
<div class="t" style="left:368px;top:908.50px;font-size:10.9px;color:#144c5e;line-height:20px;">2017</div>
<div class="t" style="left:571px;top:908.50px;font-size:10.9px;color:#144c5e;line-height:20px;">EF18</div>
<div class="t" style="left:1016px;top:908.50px;font-size:10.9px;color:#144c5e;line-height:20px;">14.01.2020</div>
<div class="r" style="left:28px;top:929px;width:1306px;height:1px;background:#e6e6e6;"></div>
<div class="t" style="left:32px;top:929.50px;font-size:10.9px;color:#144c5e;line-height:20px;">Hochschulstatistik</div>
<div class="t" style="left:186px;top:929.50px;font-size:10.9px;color:#144c5e;line-height:20px;">Ersteinschreibung - Einschreibun…</div>
<div class="t" style="left:368px;top:929.50px;font-size:10.9px;color:#144c5e;line-height:20px;">2 - Wintersemester</div>
<div class="t" style="left:571px;top:929.50px;font-size:10.9px;color:#144c5e;line-height:20px;">EF17</div>
<div class="t" style="left:1016px;top:929.50px;font-size:10.9px;color:#144c5e;line-height:20px;">14.01.2020</div>
<div class="r" style="left:28px;top:950px;width:1306px;height:1px;background:#e6e6e6;"></div>
<div class="t" style="left:32px;top:950.50px;font-size:10.9px;color:#144c5e;line-height:20px;">Hochschulstatistik</div>
<div class="t" style="left:186px;top:950.50px;font-size:10.9px;color:#144c5e;line-height:20px;">Personenmerkmale - Hörerstatus</div>
<div class="t" style="left:368px;top:950.50px;font-size:10.9px;color:#144c5e;line-height:20px;">1 - Haupthörer</div>
<div class="t" style="left:571px;top:950.50px;font-size:10.9px;color:#144c5e;line-height:20px;">EF12</div>
<div class="t" style="left:1016px;top:950.50px;font-size:10.9px;color:#144c5e;line-height:20px;">14.01.2020</div>
<div class="r" style="left:28px;top:971px;width:1306px;height:1px;background:#e6e6e6;"></div>
<div class="t" style="left:32px;top:971.50px;font-size:10.9px;color:#144c5e;line-height:20px;">Hochschulstatistik</div>
<div class="t" style="left:186px;top:971.50px;font-size:10.9px;color:#144c5e;line-height:20px;">HZB - Ort des Erwerbs</div>
<div class="t" style="left:368px;top:971.50px;font-size:10.9px;color:#144c5e;line-height:20px;">02 - Hamburg</div>
<div class="t" style="left:571px;top:971.50px;font-size:10.9px;color:#144c5e;line-height:20px;">EF111</div>
<div class="t" style="left:1016px;top:971.50px;font-size:10.9px;color:#144c5e;line-height:20px;">14.01.2020</div>
<div class="r" style="left:181.0px;top:635px;width:1px;height:356px;background:#c8c8c8;"></div>
<div class="r" style="left:363.0px;top:635px;width:1px;height:356px;background:#c8c8c8;"></div>
<div class="r" style="left:566.0px;top:635px;width:1px;height:356px;background:#c8c8c8;"></div>
<div class="r" style="left:668.0px;top:635px;width:1px;height:356px;background:#c8c8c8;"></div>
<div class="r" style="left:1011.0px;top:635px;width:1px;height:356px;background:#c8c8c8;"></div>
<div class="r" style="left:1074.0px;top:635px;width:1px;height:356px;background:#c8c8c8;"></div>
<div class="r" style="left:1126.0px;top:635px;width:1px;height:356px;background:#c8c8c8;"></div>
<div class="r" style="left:1205.0px;top:635px;width:1px;height:356px;background:#c8c8c8;"></div>
<div class="r" style="left:1334.0px;top:635px;width:1px;height:356px;background:#c8c8c8;"></div>
<svg class="r" style="left:32.5px;top:639px" width="17" height="13" viewBox="0 0 17 13"><rect x="4.4" y="1" width="7.2" height="10.6" rx="1" fill="#42a24a"/><text x="0" y="8.9" font-size="7.4" font-family="Liberation Mono,monospace" font-weight="bold" fill="#7a7a7a">A</text><text x="5.8" y="8.9" font-size="7.4" font-family="Liberation Mono,monospace" font-weight="bold" fill="#ffffff">B</text><text x="12" y="8.9" font-size="7.4" font-family="Liberation Mono,monospace" font-weight="bold" fill="#7a7a7a">C</text></svg>
<svg class="r" style="left:186.5px;top:639px" width="17" height="13" viewBox="0 0 17 13"><rect x="4.4" y="1" width="7.2" height="10.6" rx="1" fill="#42a24a"/><text x="0" y="8.9" font-size="7.4" font-family="Liberation Mono,monospace" font-weight="bold" fill="#7a7a7a">A</text><text x="5.8" y="8.9" font-size="7.4" font-family="Liberation Mono,monospace" font-weight="bold" fill="#ffffff">B</text><text x="12" y="8.9" font-size="7.4" font-family="Liberation Mono,monospace" font-weight="bold" fill="#7a7a7a">C</text></svg>
<svg class="r" style="left:368.5px;top:639px" width="17" height="13" viewBox="0 0 17 13"><rect x="4.4" y="1" width="7.2" height="10.6" rx="1" fill="#42a24a"/><text x="0" y="8.9" font-size="7.4" font-family="Liberation Mono,monospace" font-weight="bold" fill="#7a7a7a">A</text><text x="5.8" y="8.9" font-size="7.4" font-family="Liberation Mono,monospace" font-weight="bold" fill="#ffffff">B</text><text x="12" y="8.9" font-size="7.4" font-family="Liberation Mono,monospace" font-weight="bold" fill="#7a7a7a">C</text></svg>
<svg class="r" style="left:571.5px;top:639px" width="17" height="13" viewBox="0 0 17 13"><rect x="4.4" y="1" width="7.2" height="10.6" rx="1" fill="#42a24a"/><text x="0" y="8.9" font-size="7.4" font-family="Liberation Mono,monospace" font-weight="bold" fill="#7a7a7a">A</text><text x="5.8" y="8.9" font-size="7.4" font-family="Liberation Mono,monospace" font-weight="bold" fill="#ffffff">B</text><text x="12" y="8.9" font-size="7.4" font-family="Liberation Mono,monospace" font-weight="bold" fill="#7a7a7a">C</text></svg>
<svg class="r" style="left:673.5px;top:639px" width="17" height="13" viewBox="0 0 17 13"><rect x="4.4" y="1" width="7.2" height="10.6" rx="1" fill="#42a24a"/><text x="0" y="8.9" font-size="7.4" font-family="Liberation Mono,monospace" font-weight="bold" fill="#7a7a7a">A</text><text x="5.8" y="8.9" font-size="7.4" font-family="Liberation Mono,monospace" font-weight="bold" fill="#ffffff">B</text><text x="12" y="8.9" font-size="7.4" font-family="Liberation Mono,monospace" font-weight="bold" fill="#7a7a7a">C</text></svg>
<div class="t" style="left:1020px;top:635.00px;font-size:11px;color:rgba(0,0,0,0);line-height:20px;width:9px;overflow:hidden;">=</div>
<div class="r" style="left:1020px;top:644px;width:9px;height:1px;background:#5a5a5a;"></div>
<div class="r" style="left:1020px;top:646.4px;width:9px;height:1px;background:#5a5a5a;"></div>
<div class="t" style="left:1083px;top:635.00px;font-size:11px;color:rgba(0,0,0,0);line-height:20px;width:9px;overflow:hidden;">=</div>
<div class="r" style="left:1083px;top:644px;width:9px;height:1px;background:#5a5a5a;"></div>
<div class="r" style="left:1083px;top:646.4px;width:9px;height:1px;background:#5a5a5a;"></div>
<div class="t" style="left:1135px;top:635.00px;font-size:11px;color:rgba(0,0,0,0);line-height:20px;width:9px;overflow:hidden;">=</div>
<div class="r" style="left:1135px;top:644px;width:9px;height:1px;background:#5a5a5a;"></div>
<div class="r" style="left:1135px;top:646.4px;width:9px;height:1px;background:#5a5a5a;"></div>
<div class="t" style="left:1214px;top:635.00px;font-size:11px;color:rgba(0,0,0,0);line-height:20px;width:9px;overflow:hidden;">=</div>
<div class="r" style="left:1214px;top:644px;width:9px;height:1px;background:#5a5a5a;"></div>
<div class="r" style="left:1214px;top:646.4px;width:9px;height:1px;background:#5a5a5a;"></div>
<div class="r" style="left:1660px;top:634px;width:18px;height:217.5px;background:#f2f1f0;"></div>
<div class="r" style="left:1660px;top:972px;width:18px;height:17.5px;background:#f2f1f0;"></div>
<svg class="r" style="left:-1px;top:2px;" width="16" height="16" viewBox="0 0 16 16"><polygon points="0,0 16,0 6.8,7.6" fill="#e6ef12"/><polygon points="16,0 16,16 6.8,7.6" fill="#12b3d9"/><polygon points="0,0 6.8,7.6 0,8.5" fill="#3dab37"/><polygon points="0,8.5 6.8,7.6 0,16" fill="#f2f67c"/><polygon points="0,16 6.8,7.6 8,16" fill="#a9efe6"/><polygon points="8,16 6.8,7.6 16,16" fill="#e8f45f"/></svg>
<svg class="r" style="left:2px;top:89px;" width="16" height="16" viewBox="0 0 16 16"><polygon points="0,0 16,0 6.8,7.6" fill="#e6ef12"/><polygon points="16,0 16,16 6.8,7.6" fill="#12b3d9"/><polygon points="0,0 6.8,7.6 0,8.5" fill="#3dab37"/><polygon points="0,8.5 6.8,7.6 0,16" fill="#f2f67c"/><polygon points="0,16 6.8,7.6 8,16" fill="#a9efe6"/><polygon points="8,16 6.8,7.6 16,16" fill="#e8f45f"/></svg>
<svg class="r" style="left:1806px;top:4px;" width="86" height="16" viewBox="0 0 86 16"><rect x="5" y="6.2" width="9.3" height="1.7" fill="#fff"/><rect x="44.5" y="3" width="7.2" height="6.2" fill="none" stroke="#fff" stroke-width="1.4"/><rect x="41.7" y="6.8" width="6.6" height="5.6" fill="#00718a" stroke="#fff" stroke-width="1.4"/><path d="M79 4 L87 12 M79 12 L87 4" stroke="#fff" stroke-width="1.1" fill="none"/></svg>
<svg class="r" style="left:1786px;top:90px;" width="100" height="16" viewBox="0 0 100 16"><rect x="5" y="7.2" width="9.2" height="1.7" fill="#3d3531"/><rect x="44.6" y="3.8" width="7" height="6" fill="none" stroke="#3d3531" stroke-width="1.3"/><rect x="41.7" y="8" width="6.5" height="5.4" fill="#fff" stroke="#3d3531" stroke-width="1.3"/><path d="M79.5 4.7 L88 13 M79.5 13 L88 4.7" stroke="#3d3531" stroke-width="1" fill="none"/></svg>
<svg class="r" style="left:8px;top:59px;" width="23" height="19" viewBox="0 0 23 19"><ellipse cx="16.9" cy="6.8" rx="3.5" ry="4.1" fill="#fff"/><path d="M12 16.6 C12 13 13.5 12.4 15.3 11.8 L18.5 11.8 C20.7 12.4 22.3 13 22.3 15.6 L22.3 16.6 Z" fill="#fff"/><ellipse cx="7.9" cy="5.8" rx="4.7" ry="5.1" fill="#fff" stroke="#00718a" stroke-width="0.9"/><path d="M0.3 18 L0.3 16 C0.3 12.5 3 11.8 5.5 10.8 L10.3 10.8 C13 11.8 15.6 12.5 15.6 16 L15.6 18 Z" fill="#fff" stroke="#00718a" stroke-width="0.8"/></svg>
<svg class="r" style="left:125px;top:57px;" width="22" height="22" viewBox="0 0 22 22"><rect x="0.3" y="0.5" width="10.8" height="21" fill="#fff"/><rect x="2.3" y="2" width="1.1" height="4" fill="#00718a"/><rect x="2.3" y="7.2" width="1.1" height="4" fill="#00718a"/><rect x="5.1" y="2" width="1.1" height="4" fill="#00718a"/><rect x="5.1" y="7.2" width="1.1" height="4" fill="#00718a"/><rect x="7.9" y="2" width="1.1" height="4" fill="#00718a"/><rect x="7.9" y="7.2" width="1.1" height="4" fill="#00718a"/><rect x="3.6" y="14.5" width="4.2" height="7" fill="#00718a"/><rect x="12.3" y="8.2" width="9.2" height="2" fill="#fff"/><rect x="13.3" y="11.4" width="8.2" height="10.1" fill="#fff"/><rect x="14.8" y="14" width="2" height="2.6" fill="#00718a"/><rect x="18" y="14" width="2" height="2.6" fill="#00718a"/></svg>
<svg class="r" style="left:228px;top:57px;" width="15" height="22" viewBox="0 0 15 22"><path d="M4.5 11 L4.5 2.4 Q4.5 1.1 5.8 1.1 L8.8 1.1 Q10.1 1.1 10.1 2.4 L10.1 11" fill="none" stroke="#fff" stroke-width="1.5"/><rect x="0.6" y="10.6" width="13.4" height="4" rx="0.8" fill="#fff"/><path d="M2.6 14 L2.6 21.4 M12 14 L12 21.4 M2.6 17.6 L12 17.6" stroke="#fff" stroke-width="1.4" fill="none"/></svg>
<svg class="r" style="left:383px;top:58px;" width="23" height="22" viewBox="0 0 23 22"><path d="M0 3 L0 16.8 A6 2.5 0 0 0 12 16.8 L12 3 Z" fill="#fff"/><path d="M0 7.3 A6 2.5 0 0 0 12 7.3 M0 11.9 A6 2.5 0 0 0 12 11.9 M0 16.3 A6 2.5 0 0 0 12 16.3" fill="none" stroke="#00718a" stroke-width="1.1" transform="translate(0,-1.6)"/><ellipse cx="6" cy="3" rx="6" ry="2.5" fill="#fff"/><circle cx="15.6" cy="14.2" r="6.8" fill="#00718a"/><circle cx="15.6" cy="14.2" r="5.6" fill="#fff"/><text x="15.6" y="17.5" font-size="9" font-weight="bold" font-family="Liberation Serif,serif" text-anchor="middle" fill="#00718a" stroke="#00718a" stroke-width="0.35">1</text></svg>
<svg class="r" style="left:517px;top:57px;" width="22" height="22" viewBox="0 0 22 22"><path d="M4.5 0.6 L15.3 0.6 L15.3 19.4 L0 19.4 L0 5 Z" fill="#fff"/><path d="M4.5 0.6 L4.5 5 L0 5" fill="none" stroke="#00718a" stroke-width="0.8"/><circle cx="13.4" cy="14.7" r="7.6" fill="#00718a"/><circle cx="13.4" cy="14.7" r="6.3" fill="#fff"/><path d="M13.3 10.4 L13.3 15 L17 15" fill="none" stroke="#00718a" stroke-width="1.4"/></svg>
<svg class="r" style="left:663px;top:56px;" width="23" height="23" viewBox="0 0 23 23"><ellipse cx="6.8" cy="5" rx="3.8" ry="4.1" fill="#fff"/><path d="M0.2 17.6 L0.2 16 C0.2 12.6 2.4 11.8 4.6 11 L9 11 C11.2 11.8 12 12.6 12 16 L12 17.6 Z" fill="#fff"/><rect x="7.6" y="7.6" width="14.2" height="15" rx="1.4" fill="#00718a"/><path d="M11.6 9 L20.6 9 L20.6 20" fill="none" stroke="#fff" stroke-width="1.1"/><rect x="8.8" y="10.4" width="10" height="11.4" rx="0.8" fill="#fff"/><path d="M10.6 13.2 L17 13.2 M10.6 15.6 L17 15.6" stroke="#00718a" stroke-width="1" fill="none"/></svg>
<svg class="r" style="left:740px;top:56px;" width="23" height="24" viewBox="0 0 23 24"><ellipse cx="6.9" cy="5" rx="3.8" ry="4.1" fill="#fff"/><path d="M0.2 17.6 L0.2 16 C0.2 12.6 2.4 11.8 4.6 11 L9 11 C11.2 11.8 12 12.6 12 16 L12 17.6 Z" fill="#fff"/><rect x="5" y="11.8" width="17.8" height="12.4" fill="#00718a"/><rect x="6.6" y="13.4" width="14.8" height="9.4" fill="none" stroke="#fff" stroke-width="1.6"/><path d="M6.8 13.6 L14 19.2 L21.2 13.6 M6.8 22.6 L11.8 17.6 M21.2 22.6 L16.2 17.6" fill="none" stroke="#fff" stroke-width="1.5"/></svg>
<svg class="r" style="left:857px;top:57px;" width="22" height="22" viewBox="0 0 22 22"><path d="M5.4 0.6 L16.2 0.6 L16.2 19.4 L0.9 19.4 L0.9 5 Z" fill="#fff"/><path d="M5.4 0.6 L5.4 5 L0.9 5" fill="none" stroke="#00718a" stroke-width="0.8"/><path d="M7.4 3.6 L13.8 3.6 M3.2 7.8 L13.8 7.8" stroke="#00718a" stroke-width="1.6" fill="none"/><circle cx="14.3" cy="15.2" r="6.6" fill="#00718a"/><text x="14.4" y="19.2" font-size="12.5" font-weight="bold" font-family="Liberation Sans,sans-serif" text-anchor="middle" fill="#fff" stroke="#fff" stroke-width="0.3">@</text></svg>
<svg class="r" style="left:950px;top:57px;" width="23" height="21" viewBox="0 0 23 21"><rect x="0.4" y="0.5" width="21.4" height="19.4" rx="2" fill="#fff"/><path d="M8 1.8 L8 18.6 M8 6.9 L20.4 6.9 M8 12.9 L20.4 12.9" stroke="#00718a" stroke-width="1.7" fill="none"/><path d="M4.6 2.6 L4.6 5.6 M3.8 9 L5.4 9 L3.8 11.4 L5.4 11.4 M3.8 14.6 L5.4 14.6 L4.4 16 L5.4 17.4 L3.8 17.4" stroke="#00718a" stroke-width="0.8" fill="none"/></svg>
<svg class="r" style="left:11px;top:120px;" width="14" height="18" viewBox="0 0 14 18"><path d="M3.6 1 L13 1 L13 17 L1 17 L1 3.6 Z" fill="#0a6a82"/><text x="7.1" y="13.2" font-size="10.5" font-weight="bold" font-family="Liberation Sans,sans-serif" text-anchor="middle" fill="#fff">?</text></svg>
<svg class="r" style="left:35px;top:120px;" width="18" height="18" viewBox="0 0 18 18"><path d="M4 1 L11 1 L11 14.2 L1 14.2 L1 4 Z" fill="#0a6a82"/><path d="M4.2 2.6 L4.2 4.2 L2.6 4.2 Z" fill="#d6e8ee"/><path d="M13 7.8 L13 17.2 M8.3 12.6 L17.7 12.6" stroke="#fff" stroke-width="3.6" fill="none"/><path d="M13 8.6 L13 16.8 M8.9 12.7 L17.1 12.7" stroke="#0a6a82" stroke-width="1.9" fill="none"/></svg>
<svg class="r" style="left:61px;top:120px;" width="18" height="18" viewBox="0 0 18 18"><path d="M3.6 1 L10 1 L10 12.6 L1 12.6 L1 3.6 Z" fill="#b7ced6"/><path d="M3.8 2.4 L3.8 3.8 L2.4 3.8 Z" fill="#fff" opacity="0.7"/><path d="M2.6 6.6 L8.4 6.6 M2.6 8.8 L8.4 8.8" stroke="#e8f0f3" stroke-width="0.8"/><rect x="7.6" y="4.6" width="10.4" height="13" fill="#fbfbfb"/><path d="M11 5.4 L17 5.4 L17 17 L8.4 17 L8.4 8 Z" fill="#b7ced6"/><path d="M11.2 6.8 L11.2 8.2 L9.8 8.2 Z" fill="#fff" opacity="0.7"/><path d="M10 11.6 L15.4 11.6 M10 13.8 L15.4 13.8" stroke="#eef4f6" stroke-width="0.8"/></svg>
<svg class="r" style="left:88px;top:120px;" width="16" height="18" viewBox="0 0 16 18"><path d="M5.4 3 L5.4 1.9 L10.6 1.9 L10.6 3" fill="none" stroke="#0a6a82" stroke-width="1.8"/><rect x="1" y="3.2" width="14" height="3.3" rx="0.7" fill="#0a6a82"/><path d="M2.2 7.4 L13.8 7.4 L13.8 15.6 Q13.8 17 12.4 17 L3.6 17 Q2.2 17 2.2 15.6 Z" fill="#0a6a82"/><path d="M5.1 9 L5.1 15.2 M8 9 L8 15.2 M10.9 9 L10.9 15.2" stroke="#fff" stroke-width="1.1"/></svg>
<svg class="r" style="left:127px;top:120px;" width="19" height="18" viewBox="0 0 19 18"><circle cx="10.2" cy="7.2" r="5.9" fill="none" stroke="#0a6a82" stroke-width="1.6"/><path d="M6 11.6 L1.6 16.4" stroke="#0a6a82" stroke-width="2.2" stroke-linecap="round"/></svg>
<svg class="r" style="left:153px;top:120px;" width="19" height="18" viewBox="0 0 19 18"><circle cx="8.6" cy="5.4" r="4.4" fill="none" stroke="#0a6a82" stroke-width="1.3"/><path d="M5.2 8.8 L1.4 11.8" stroke="#0a6a82" stroke-width="1.9" stroke-linecap="round"/><rect x="7" y="7.4" width="11" height="10" fill="#fbfbfb"/><path d="M8 8.4 L15.4 8.4 L17.2 10.2 L17.2 17 L8 17 Z" fill="#0a6a82"/><rect x="9.8" y="8.4" width="4.6" height="2.6" fill="#fff"/><rect x="12" y="8.4" width="1.4" height="2.2" fill="#0a6a82"/><rect x="9.6" y="13" width="6" height="4" fill="#fff"/></svg>
<svg class="r" style="left:179px;top:120px;" width="18" height="18" viewBox="0 0 18 18"><path d="M1 1 L14 1 L17 4 L17 17 L1 17 Z" fill="#0a6a82"/><rect x="3.8" y="1" width="8.4" height="5.6" fill="#fff"/><rect x="7" y="1" width="2.8" height="4.6" fill="#0a6a82"/><rect x="3.8" y="9.2" width="10.2" height="7.8" fill="#fff"/><rect x="3.8" y="11.2" width="10.2" height="0.9" fill="#0a6a82" opacity="0.55"/><rect x="3.8" y="9" width="10.2" height="1.6" fill="#0a6a82" opacity="0"/></svg>
<svg class="r" style="left:205px;top:120px;" width="18" height="18" viewBox="0 0 18 18"><rect x="4.4" y="1.6" width="9.2" height="5.4" rx="0.8" fill="#fff" stroke="#0a6a82" stroke-width="1.3"/><rect x="1" y="6.6" width="16" height="8" rx="2" fill="#0a6a82"/><rect x="4.4" y="11.4" width="9.2" height="5.2" rx="0.8" fill="#fff" stroke="#0a6a82" stroke-width="1.3"/><rect x="6.4" y="13.2" width="5.2" height="1.6" fill="#0a6a82"/></svg>
<svg class="r" style="left:245px;top:120px;" width="19" height="18" viewBox="0 0 19 18"><path d="M4 1 L11 1 L11 14 L1 14 L1 4 Z" fill="#0a6a82"/><path d="M4.2 2.6 L4.2 4.2 L2.6 4.2 Z" fill="#d6e8ee"/><circle cx="13.7" cy="12.7" r="5" fill="#fbfbfb"/><path d="M10.4 12 A3.4 3.4 0 0 1 16.4 10.6 M17 13.4 A3.4 3.4 0 0 1 11 14.8" fill="none" stroke="#0a6a82" stroke-width="1.5"/><path d="M17.4 8.6 L17.4 11.6 L14.4 11.6 Z M10 16.8 L10 13.8 L13 13.8 Z" fill="#0a6a82"/></svg>
<svg class="r" style="left:273px;top:120px;" width="14" height="18" viewBox="0 0 14 18"><rect x="1" y="1" width="12" height="16" rx="1.4" fill="#0a6a82"/><path d="M3 4.6 L11 4.6 M3 7 L11 7 M3 9.4 L11 9.4 M3 11.8 L11 11.8 M3 14.2 L9 14.2" stroke="#fff" stroke-width="1"/></svg>
<svg class="r" style="left:297px;top:120px;" width="18" height="18" viewBox="0 0 18 18"><rect x="1.6" y="1.6" width="14.8" height="10.6" rx="1.2" fill="#fff" stroke="#0a6a82" stroke-width="1.3"/><rect x="4.4" y="7.6" width="2.2" height="3.2" fill="#0a6a82"/><rect x="7.5" y="5.6" width="2.2" height="5.2" fill="#0a6a82"/><rect x="10.6" y="3.8" width="2.2" height="7" fill="#0a6a82"/><path d="M9 12.4 L9 16.4 M4.4 16.5 L13.6 16.5" stroke="#0a6a82" stroke-width="1.2" fill="none"/></svg>
<svg class="r" style="left:325px;top:120px;" width="14" height="18" viewBox="0 0 14 18"><path d="M4 8 L4 4.6 Q4 1.8 7.2 1.8 L8.4 1.8 Q11.6 1.8 11.6 4.6 L11.6 6.4" fill="none" stroke="#0a6a82" stroke-width="1.9"/><rect x="1" y="8.2" width="12" height="8.8" rx="1.3" fill="#0a6a82"/><path d="M7 11.4 L7 14.4" stroke="#fff" stroke-width="1.5" stroke-linecap="round"/></svg>
<svg class="r" style="left:617px;top:120px;" width="18" height="18" viewBox="0 0 18 18"><rect x="1" y="1" width="2" height="16" fill="#0a6a82"/><path d="M5.8 9 L16.2 1.8 L16.2 16.2 Z" fill="#0a6a82" stroke="#0a6a82" stroke-width="1.6" stroke-linejoin="round"/></svg>
<svg class="r" style="left:645px;top:120px;" width="14" height="18" viewBox="0 0 14 18"><path d="M1.8 9 L12.2 1.8 L12.2 16.2 Z" fill="#0a6a82" stroke="#0a6a82" stroke-width="1.6" stroke-linejoin="round"/></svg>
<svg class="r" style="left:671px;top:120px;" width="14" height="18" viewBox="0 0 14 18"><path d="M12.4 9 L1.8 1.8 L1.8 16.2 Z" fill="#0a6a82" stroke="#0a6a82" stroke-width="1.6" stroke-linejoin="round"/></svg>
<svg class="r" style="left:695px;top:120px;" width="18" height="18" viewBox="0 0 18 18"><path d="M12.2 9 L1.8 1.8 L1.8 16.2 Z" fill="#0a6a82" stroke="#0a6a82" stroke-width="1.6" stroke-linejoin="round"/><rect x="15" y="1" width="2" height="16" fill="#0a6a82"/></svg>
<svg class="r" style="left:721px;top:120px;" width="18" height="18" viewBox="0 0 18 18"><circle cx="7.9" cy="5.8" r="4.8" fill="none" stroke="#0a6a82" stroke-width="1.3"/><path d="M4.4 9.4 L1.4 12.2" stroke="#0a6a82" stroke-width="1.9" stroke-linecap="round"/><rect x="7.6" y="9.4" width="10" height="8" fill="#fbfbfb"/><path d="M10.2 10.6 L17 10.6 M10.2 12.6 L17 12.6 M10.2 14.6 L17 14.6 M10.2 16.6 L17 16.6" stroke="#0a6a82" stroke-width="1"/><path d="M8.2 10.6 L9.2 10.6 M8.2 12.6 L9.2 12.6 M8.2 14.6 L9.2 14.6 M8.2 16.6 L9.2 16.6" stroke="#0a6a82" stroke-width="1"/></svg>
<svg class="r" style="left:1858px;top:120px;" width="16" height="18" viewBox="0 0 16 18"><path d="M3.6 6.6 L3.6 2.6 Q3.6 1.6 4.6 1.6 L13.4 1.6 Q14.4 1.6 14.4 2.6 L14.4 15.4 Q14.4 16.4 13.4 16.4 L4.6 16.4 Q3.6 16.4 3.6 15.4 L3.6 14.2" fill="none" stroke="#0a6a82" stroke-width="1.2"/><path d="M1.6 10.4 L6 10.4" stroke="#0a6a82" stroke-width="1.8"/><path d="M5.2 7.4 L8.8 10.4 L5.2 13.4 Z" fill="#0a6a82"/></svg>
<svg class="r" style="left:390px;top:340px;" width="18" height="18" viewBox="0 0 18 18"><rect x="1.4" y="1.6" width="9.6" height="7" fill="#fff" stroke="#0a6a82" stroke-width="1.1"/><path d="M1.6 1.8 L6.2 5.6 L10.8 1.8 M1.6 8.4 L4.8 5 M10.8 8.4 L7.6 5" fill="none" stroke="#0a6a82" stroke-width="0.9"/><rect x="6.8" y="6.6" width="11" height="11" fill="#fff"/><path d="M7.8 7.6 L15.2 7.6 L17 9.4 L17 17 L7.8 17 Z" fill="#0a6a82"/><rect x="9.8" y="7.6" width="4.6" height="3" fill="#fff"/><rect x="12.2" y="7.6" width="1.3" height="2.4" fill="#0a6a82"/><rect x="9.6" y="12.6" width="5.8" height="4.4" fill="#fff"/></svg>
<svg class="r" style="left:389px;top:395px;" width="18" height="18" viewBox="0 0 18 18"><path d="M4 1 L11 1 L11 14.2 L1 14.2 L1 4 Z" fill="#0a6a82"/><path d="M4.2 2.6 L4.2 4.2 L2.6 4.2 Z" fill="#d6e8ee"/><path d="M13 7.8 L13 17.2 M8.3 12.6 L17.7 12.6" stroke="#fff" stroke-width="3.6" fill="none"/><path d="M13 8.6 L13 16.8 M8.9 12.7 L17.1 12.7" stroke="#0a6a82" stroke-width="1.9" fill="none"/></svg>
<svg class="r" style="left:390px;top:423px;" width="16" height="18" viewBox="0 0 16 18"><path d="M5.4 3 L5.4 1.9 L10.6 1.9 L10.6 3" fill="none" stroke="#0a6a82" stroke-width="1.8"/><rect x="1" y="3.2" width="14" height="3.3" rx="0.7" fill="#0a6a82"/><path d="M2.2 7.4 L13.8 7.4 L13.8 15.6 Q13.8 17 12.4 17 L3.6 17 Q2.2 17 2.2 15.6 Z" fill="#0a6a82"/><path d="M5.1 9 L5.1 15.2 M8 9 L8 15.2 M10.9 9 L10.9 15.2" stroke="#fff" stroke-width="1.1"/></svg>
<svg class="r" style="left:389px;top:479px;" width="18" height="18" viewBox="0 0 18 18"><path d="M1 3.4 Q1 2 2.4 2 L6.4 2 L7.6 3.6 L15.6 3.6 Q17 3.6 17 5 L17 15.6 Q17 17 15.6 17 L2.4 17 Q1 17 1 15.6 Z" fill="#0a6a82"/><path d="M2 5.2 L16 5.2" stroke="#fff" stroke-width="0.8"/><path d="M2.6 8.6 Q9 7.2 15.6 8.2 Q15.4 14.8 9.2 14.8 Q3.4 14.6 2.6 8.6 Z" fill="#fff"/><path d="M4.6 9.4 Q9 8.8 13.6 9.4 Q12.6 12.4 10.4 12.6 Q10.4 9.6 7.6 9.6 Q5.6 9.8 5.4 11.6 Q4.8 10.6 4.6 9.4 Z" fill="#0a6a82"/><circle cx="7.8" cy="11.6" r="1.3" fill="#0a6a82"/></svg>
<svg class="r" style="left:1721px;top:149px;" width="18" height="18" viewBox="0 0 18 18"><rect x="1.6" y="1.7" width="14.8" height="11" rx="1" fill="#fff" stroke="#0a6a82" stroke-width="1.3"/><circle cx="9" cy="5.4" r="1.9" fill="#0a6a82"/><path d="M5.4 11 Q5.4 8 9 8 Q12.6 8 12.6 11 Z" fill="#0a6a82"/><path d="M9 13 L9 16 M4.4 16.3 L13.6 16.3" stroke="#0a6a82" stroke-width="1.2" fill="none"/></svg>
<svg class="r" style="left:1740px;top:169px;" width="18" height="17" viewBox="0 0 18 17"><rect x="6.8" y="1.5" width="9.6" height="10.4" rx="0.8" fill="none" stroke="#0a6a82" stroke-width="1.2"/><rect x="6.8" y="1.2" width="9.6" height="2.6" fill="#0a6a82"/><rect x="1.6" y="6.4" width="9.6" height="9.4" rx="0.8" fill="#fff" stroke="#0a6a82" stroke-width="1.2"/><rect x="1.6" y="6" width="9.6" height="2.8" fill="#0a6a82"/></svg>
<svg class="r" style="left:1740px;top:189px;" width="18" height="17" viewBox="0 0 18 17"><rect x="6.8" y="1.5" width="9.6" height="10.4" rx="0.8" fill="none" stroke="#0a6a82" stroke-width="1.2"/><rect x="6.8" y="1.2" width="9.6" height="2.6" fill="#0a6a82"/><rect x="1.6" y="6.4" width="9.6" height="9.4" rx="0.8" fill="#fff" stroke="#0a6a82" stroke-width="1.2"/><rect x="1.6" y="6" width="9.6" height="2.8" fill="#0a6a82"/></svg>
<svg class="r" style="left:1721px;top:210px;" width="18" height="16" viewBox="0 0 18 16"><path d="M1 2.4 Q1 1 2.4 1 L6 1 Q7 1 7.4 2 L8 3.4 L15.8 3.4 Q17 3.4 17 4.6 L17 13.6 Q17 15 15.6 15 L2.4 15 Q1 15 1 13.6 Z" fill="#0a6a82"/><path d="M6.6 4.6 L17 4.6" stroke="#f2f1f0" stroke-width="0.7"/></svg>
<svg class="r" style="left:1721px;top:230px;" width="18" height="16" viewBox="0 0 18 16"><path d="M1 2.4 Q1 1 2.4 1 L6 1 Q7 1 7.4 2 L8 3.4 L15.8 3.4 Q17 3.4 17 4.6 L17 13.6 Q17 15 15.6 15 L2.4 15 Q1 15 1 13.6 Z" fill="#0a6a82"/><path d="M6.6 4.6 L17 4.6" stroke="#f2f1f0" stroke-width="0.7"/></svg>
<svg class="r" style="left:1721px;top:250px;" width="18" height="16" viewBox="0 0 18 16"><path d="M1 2.4 Q1 1 2.4 1 L6 1 Q7 1 7.4 2 L8 3.4 L15.8 3.4 Q17 3.4 17 4.6 L17 13.6 Q17 15 15.6 15 L2.4 15 Q1 15 1 13.6 Z" fill="#0a6a82"/><path d="M6.6 4.6 L17 4.6" stroke="#f2f1f0" stroke-width="0.7"/></svg>
<svg class="r" style="left:1721px;top:270px;" width="18" height="16" viewBox="0 0 18 16"><path d="M1 2.4 Q1 1 2.4 1 L6 1 Q7 1 7.4 2 L8 3.4 L15.8 3.4 Q17 3.4 17 4.6 L17 13.6 Q17 15 15.6 15 L2.4 15 Q1 15 1 13.6 Z" fill="#0a6a82"/><path d="M6.6 4.6 L17 4.6" stroke="#f2f1f0" stroke-width="0.7"/></svg>
<svg class="r" style="left:1721px;top:290px;" width="18" height="16" viewBox="0 0 18 16"><path d="M1 2.4 Q1 1 2.4 1 L6 1 Q7 1 7.4 2 L8 3.4 L15.8 3.4 Q17 3.4 17 4.6 L17 13.6 Q17 15 15.6 15 L2.4 15 Q1 15 1 13.6 Z" fill="#0a6a82"/><path d="M6.6 4.6 L17 4.6" stroke="#f2f1f0" stroke-width="0.7"/></svg>
<svg class="r" style="left:1721px;top:310px;" width="18" height="16" viewBox="0 0 18 16"><path d="M1 2.4 Q1 1 2.4 1 L6 1 Q7 1 7.4 2 L8 3.4 L15.8 3.4 Q17 3.4 17 4.6 L17 13.6 Q17 15 15.6 15 L2.4 15 Q1 15 1 13.6 Z" fill="#0a6a82"/><path d="M6.6 4.6 L17 4.6" stroke="#f2f1f0" stroke-width="0.7"/></svg>
<svg class="r" style="left:1721px;top:330px;" width="18" height="16" viewBox="0 0 18 16"><path d="M1 2.4 Q1 1 2.4 1 L6 1 Q7 1 7.4 2 L8 3.4 L15.8 3.4 Q17 3.4 17 4.6 L17 13.6 Q17 15 15.6 15 L2.4 15 Q1 15 1 13.6 Z" fill="#0a6a82"/><path d="M6.6 4.6 L17 4.6" stroke="#f2f1f0" stroke-width="0.7"/></svg>
<svg class="r" style="left:1721px;top:350px;" width="18" height="16" viewBox="0 0 18 16"><path d="M1 2.4 Q1 1 2.4 1 L6 1 Q7 1 7.4 2 L8 3.4 L15.8 3.4 Q17 3.4 17 4.6 L17 13.6 Q17 15 15.6 15 L2.4 15 Q1 15 1 13.6 Z" fill="#0a6a82"/><path d="M6.6 4.6 L17 4.6" stroke="#f2f1f0" stroke-width="0.7"/></svg>
<div class="r" style="left:1728px;top:179px;width:11px;height:20px;border-left:1px dotted #cfcfcf;border-top:1px dotted #cfcfcf;border-bottom:1px dotted #cfcfcf;"></div>
<div class="r" style="left:1719px;top:158px;width:2px;height:1px;background:#d4d4d4;"></div>
<div class="r" style="left:1719px;top:218px;width:2px;height:1px;background:#d4d4d4;"></div>
<div class="r" style="left:1719px;top:238px;width:2px;height:1px;background:#d4d4d4;"></div>
<div class="r" style="left:1719px;top:258px;width:2px;height:1px;background:#d4d4d4;"></div>
<div class="r" style="left:1719px;top:278px;width:2px;height:1px;background:#d4d4d4;"></div>
<div class="r" style="left:1719px;top:298px;width:2px;height:1px;background:#d4d4d4;"></div>
<div class="r" style="left:1719px;top:318px;width:2px;height:1px;background:#d4d4d4;"></div>
<div class="r" style="left:1719px;top:338px;width:2px;height:1px;background:#d4d4d4;"></div>
<div class="r" style="left:1719px;top:358px;width:2px;height:1px;background:#d4d4d4;"></div>
<div class="r" style="left:1685px;top:407px;width:16px;height:5px;background:#0a6a82;border-radius:1.5px;"></div>
<svg class="r" style="left:1685px;top:428.4px;" width="17" height="16" viewBox="0 0 17 16"><rect x="0" y="0" width="7.4" height="15.4" fill="#0a6a82"/><rect x="1.2" y="1.2" width="0.9" height="2.6" fill="#fff"/><rect x="1.2" y="5" width="0.9" height="2.6" fill="#fff"/><rect x="3.2" y="1.2" width="0.9" height="2.6" fill="#fff"/><rect x="3.2" y="5" width="0.9" height="2.6" fill="#fff"/><rect x="5.2" y="1.2" width="0.9" height="2.6" fill="#fff"/><rect x="5.2" y="5" width="0.9" height="2.6" fill="#fff"/><rect x="2.2" y="10.6" width="3" height="4.8" fill="#fff"/><circle cx="11" cy="11" r="5" fill="#fff"/><path d="M9.4 13.4 Q14 12.6 14.6 8" fill="none" stroke="#0a6a82" stroke-width="1.9"/><ellipse cx="14.6" cy="7.4" rx="1.7" ry="2.2" transform="rotate(18 14.6 7.4)" fill="#0a6a82"/><ellipse cx="9.6" cy="13.2" rx="2.3" ry="1.7" transform="rotate(-18 9.6 13.2)" fill="#0a6a82"/></svg>
<svg class="r" style="left:1685px;top:455px;" width="17" height="17" viewBox="0 0 17 17"><path d="M4.4 13 Q12.2 12 13 4.2" fill="none" stroke="#0a6a82" stroke-width="3"/><ellipse cx="12.9" cy="3.9" rx="2.7" ry="3.4" transform="rotate(16 12.9 3.9)" fill="#0a6a82"/><ellipse cx="4.2" cy="12.7" rx="3.6" ry="2.7" transform="rotate(-16 4.2 12.7)" fill="#0a6a82"/></svg>
<svg class="r" style="left:435px;top:488px;" width="8" height="8" viewBox="0 0 8 8"><path d="M1 7 L1.6 5 L5.6 1 L7 2.4 L3 6.4 Z" fill="#0a6a82"/></svg>
<svg class="r" style="left:1684px;top:605px;" width="18" height="18" viewBox="0 0 18 18"><path d="M9 2.4 L9 15.6 M2.4 9 L15.6 9" stroke="#0a6a82" stroke-width="3.6" stroke-linecap="round"/></svg>
<svg class="r" style="left:1662px;top:638px;" width="13" height="11" viewBox="0 0 13 11"><path d="M2.2 7.4 L6.5 3.4 L10.8 7.4" fill="none" stroke="#0a6a82" stroke-width="1.9"/></svg>
<svg class="r" style="left:1662px;top:975px;" width="13" height="11" viewBox="0 0 13 11"><path d="M2.2 3.4 L6.5 7.4 L10.8 3.4" fill="none" stroke="#0a6a82" stroke-width="1.9"/></svg>
<svg class="r" style="left:1664px;top:747px;" width="9" height="10" viewBox="0 0 9 10"><path d="M1 2 L8 2 M1 4.8 L8 4.8 M1 7.6 L8 7.6" stroke="#0a6a82" stroke-width="1.4"/></svg>
<svg class="r" style="left:14px;top:640px;" width="9" height="11" viewBox="0 0 9 11"><circle cx="4.4" cy="4.3" r="2.3" fill="#111"/><path d="M4.4 6 L4.4 9.2" stroke="#111" stroke-width="1.3"/><circle cx="4" cy="3.8" r="0.7" fill="#fff"/></svg>
</body></html>
